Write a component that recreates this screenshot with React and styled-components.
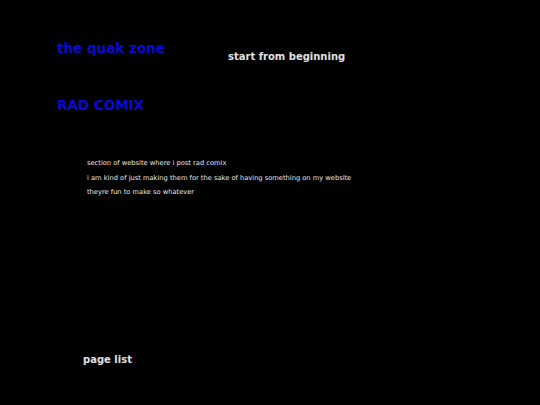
import React from "react";
import styled, { createGlobalStyle } from "styled-components";

const Global = createGlobalStyle`
  html, body {
    margin: 0;
    padding: 0;
    background: #000;
  }
  body {
    font-family: "DejaVu Sans", sans-serif;
    -webkit-font-smoothing: antialiased;
  }
`;

const Page = styled.div`
  width: 540px;
  height: 405px;
  background: #000;
  display: flex;
  flex-direction: column;
  padding: 40px 0 0 57px;
  box-sizing: border-box;
`;

const Header = styled.div`
  display: flex;
  align-items: flex-start;
`;

const Title = styled.h1`
  margin: 0;
  width: 171px;
  font-size: 13.5px;
  line-height: 16px;
  font-weight: bold;
  color: #0a0ad0;
`;

const NavLink = styled.a`
  margin-top: 11px;
  font-size: 10px;
  line-height: 12px;
  font-weight: bold;
  color: #e0e0e0;
  text-decoration: none;
`;

const Section = styled.h2`
  margin: 34px 0 0;
  font-size: 13.5px;
  line-height: 16px;
  font-weight: bold;
  color: #0a0ad0;
`;

const Blurb = styled.div`
  margin: 43px 0 0 30px;
  display: flex;
  flex-direction: column;
`;

const Line = styled.p`
  margin: 0;
  font-size: 6.7px;
  line-height: 14.5px;
  color: #e8e8e8;
`;

const Footer = styled.a`
  margin: 154px 0 0 26px;
  font-size: 10px;
  line-height: 12px;
  font-weight: bold;
  color: #e0e0e0;
  text-decoration: none;
`;

export default function App() {
  return (
    <>
      <Global />
      <Page>
        <Header>
          <Title>the quak zone</Title>
          <NavLink href="#">start from beginning</NavLink>
        </Header>
        <Section>RAD COMIX</Section>
        <Blurb>
          <Line>section of website where i post rad comix</Line>
          <Line>i am kind of just making them for the sake of having something on my website</Line>
          <Line>theyre fun to make so whatever</Line>
        </Blurb>
        <Footer href="#">page list</Footer>
      </Page>
    </>
  );
}
